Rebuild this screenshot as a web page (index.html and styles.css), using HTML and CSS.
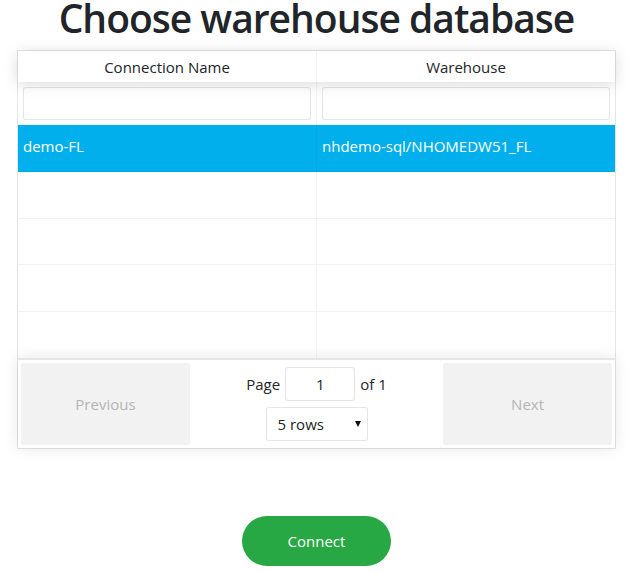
FILE: index.html
```html
<!DOCTYPE html>
<html>
<head>
<meta charset="utf-8">
<title>Choose warehouse database</title>
<link rel="stylesheet" href="styles.css">
</head>
<body>
<div class="page">
  <h1 class="title">Choose warehouse database</h1>
  <div class="table">
    <div class="thead">
      <div class="th">Connection Name</div>
      <div class="th">Warehouse</div>
    </div>
    <div class="filters">
      <div class="fcell"><input class="finput" type="text"></div>
      <div class="fcell"><input class="finput" type="text"></div>
    </div>
    <div class="tbody">
      <div class="tr selected"><div class="td">demo-FL</div><div class="td">nhdemo-sql/NHOMEDW51_FL</div></div>
      <div class="tr"><div class="td"></div><div class="td"></div></div>
      <div class="tr"><div class="td"></div><div class="td"></div></div>
      <div class="tr"><div class="td"></div><div class="td"></div></div>
      <div class="tr"><div class="td"></div><div class="td"></div></div>
    </div>
    <div class="pagination">
      <button class="pbtn" disabled>Previous</button>
      <div class="center">
        <span class="pageinfo">Page <input class="jump" type="text" value="1"> of 1</span>
        <span class="sizeopt"><select class="sizesel"><option>5 rows</option></select><span class="arrow"></span></span>
      </div>
      <button class="pbtn" disabled>Next</button>
    </div>
  </div>
  <div class="actions"><button class="connect">Connect</button></div>
</div>
</body>
</html>
```
FILE: styles.css
```css
html, body {
  margin: 0;
  padding: 0;
  background: #fff;
}
body {
  font-family: "Open Sans", "Noto Sans", sans-serif;
  font-size: 16px;
  color: #212529;
}
.page {
  width: 599px;
  margin-left: 17px;
}
.title {
  margin: 0 0 14px;
  height: 36px;
  font-size: 39px;
  font-weight: 600;
  letter-spacing: -1px;
  line-height: 36px;
  text-align: center;
  color: #212529;
  white-space: nowrap;
}
.table {
  border: 1px solid rgba(0,0,0,0.1);
  display: flex;
  flex-direction: column;
}
.thead {
  display: flex;
  height: 31px;
  box-shadow: 0 2px 15px 0 rgba(0,0,0,0.15);
  position: relative;
  z-index: 1;
}
.th {
  flex: 1;
  display: flex;
  align-items: center;
  justify-content: center;
  border-right: 1px solid rgba(0,0,0,0.05);
  font-size: 15px;
}
.th:last-child { border-right: 0; }
.filters {
  display: flex;
  border-bottom: 1px solid rgba(0,0,0,0.05);
}
.fcell {
  flex: 1;
  padding: 5px 5px 4px;
  border-right: 1px solid rgba(0,0,0,0.05);
}
.fcell:last-child { border-right: 0; }
.finput {
  display: block;
  box-sizing: border-box;
  width: 100%;
  height: 33px;
  border: 1px solid rgba(0,0,0,0.1);
  border-radius: 3px;
  background: #fff;
  font: inherit;
  padding: 5px 7px;
  outline: none;
}
.tbody {
  display: flex;
  flex-direction: column;
}
.tr {
  display: flex;
  height: 45.8px;
  border-bottom: 1px solid rgba(0,0,0,0.05);
}
.tr:last-child { border-bottom: 0; }
.td {
  flex: 1;
  display: flex;
  align-items: center;
  padding: 0 5px 4px;
  border-right: 1px solid rgba(0,0,0,0.05);
  font-size: 15px;
}
.td:last-child { border-right: 0; }
.tr.selected {
  background: #00afeb;
  color: #fff;
}
.tr.selected .td { border-right-color: rgba(0,0,0,0.03); }
.pagination {
  display: flex;
  padding: 3px;
  border-top: 2px solid rgba(0,0,0,0.1);
  box-shadow: 0 0 15px 0 rgba(0,0,0,0.1);
  position: relative;
  z-index: 1;
}
.pbtn {
  flex: 1;
  height: 82px;
  padding: 0;
  border: 0;
  border-radius: 3px;
  background: #f2f2f2;
  color: #b5b5b5;
  font: inherit;
  font-size: 15px;
}
.center {
  flex: 1.5;
  display: flex;
  flex-direction: column;
  align-items: center;
  justify-content: center;
  gap: 6px;
}
.pageinfo {
  display: flex;
  align-items: center;
  gap: 5px;
  font-size: 15px;
}
.jump {
  box-sizing: border-box;
  width: 70px;
  height: 34px;
  border: 1px solid rgba(0,0,0,0.1);
  border-radius: 3px;
  text-align: center;
  font: inherit;
  color: #212529;
  outline: none;
  background: #fff;
}
.sizeopt {
  position: relative;
  display: block;
}
.sizesel {
  -webkit-appearance: none;
  appearance: none;
  box-sizing: border-box;
  width: 102px;
  height: 34px;
  border: 1px solid rgba(0,0,0,0.1);
  border-radius: 3px;
  background: #fff;
  font: inherit;
  font-size: 15px;
  color: #212529;
  padding: 0 11px;
  outline: none;
}
.arrow {
  position: absolute;
  right: 7px;
  top: 14px;
  width: 0;
  height: 0;
  border-left: 3.5px solid transparent;
  border-right: 3.5px solid transparent;
  border-top: 6px solid #111;
  pointer-events: none;
}
.actions {
  display: flex;
  justify-content: center;
  padding-top: 67px;
}
.connect {
  width: 149px;
  height: 50px;
  border: 0;
  border-radius: 25px;
  background: #28a745;
  color: #fff;
  font: inherit;
  font-size: 15px;
}
```
